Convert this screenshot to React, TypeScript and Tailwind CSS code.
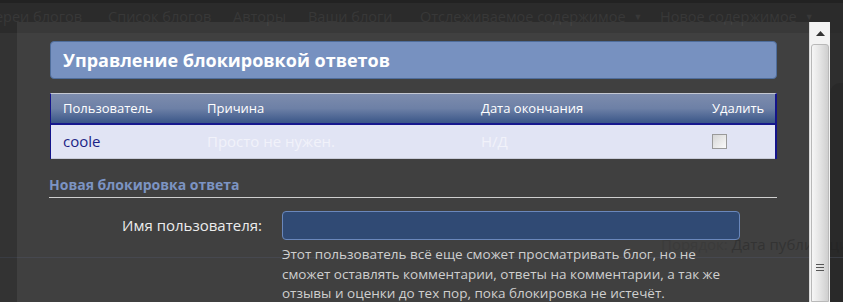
const navItems = [
  { label: 'Галереи блогов', width: 'w-[108px] justify-end pr-[26px]', arrow: false },
  { label: 'Список блогов', width: 'w-[125px]', arrow: false },
  { label: 'Авторы', width: 'w-[75px]', arrow: false },
  { label: 'Ваши блоги', width: 'w-[112px]', arrow: false },
  { label: 'Отслеживаемое содержимое', width: 'w-[240px]', arrow: true },
  { label: 'Новое содержимое', width: 'w-[200px]', arrow: true },
];

function Scrollbar() {
  return (
    <div className="w-[21px] shrink-0 flex flex-col bg-[#f3f3f3] border-l border-[#d8d8d8]">
      <div className="h-[22px] flex items-center justify-center">
        <svg width="9" height="5" viewBox="0 0 9 5"><path d="M0 5 L4.5 0 L9 5 Z" fill="#333" /></svg>
      </div>
      <div className="flex-1 mx-[1px] rounded-t-[3px] border border-[#b9b9b9] bg-gradient-to-r from-[#f6f6f6] via-[#e4e4e4] to-[#cfcfcf] flex items-end justify-center pb-[30px]">
        <div className="flex flex-col gap-[2px]">
          <div className="w-[8px] h-[1px] bg-[#555]" />
          <div className="w-[8px] h-[1px] bg-[#555]" />
          <div className="w-[8px] h-[1px] bg-[#555]" />
        </div>
      </div>
    </div>
  );
}

export default function App() {
  return (
    <div className="relative w-[843px] h-[302px] overflow-hidden bg-[#333333] font-['Open_Sans',sans-serif]">
      {/* page behind the dialog */}
      <div className="h-[3px] bg-[#222222]" />
      <nav className="h-[30px] bg-[#2b2b2b] flex items-start pt-[3px] text-[14.5px] text-[#383838] whitespace-nowrap">
        {navItems.map((item) => (
          <span key={item.label} className={`${item.width} shrink-0 flex items-center gap-[8px]`}>
            {item.label}
            {item.arrow && <span className="text-[9px]">▼</span>}
          </span>
        ))}
      </nav>
      <div className="flex">
        <div className="flex-1" />
        <div className="w-[13px] h-[269px] bg-[#2e2e2e] flex flex-col">
          <div className="h-[50px]" />
          <div className="flex-1 rounded-tl-[10px] bg-[#292929]" />
        </div>
      </div>
      <div className="absolute left-0 right-0 top-[233px] h-[25px] border-b border-[#393c43] pl-[661px] text-[15px] whitespace-nowrap">
        <span className="text-[#2e2e2e]">Порядок: </span>
        <span className="text-[#252525]">Дата публикации (</span>
      </div>

      {/* dialog */}
      <div className="absolute left-[17px] top-[22px] right-[13px] bottom-0 bg-white/[0.064] flex">
        <div className="flex-1 pl-[33px] pr-[32px] pt-[19px]">
          <div className="h-[38px] rounded-[4px] border border-[#4f6d9b] bg-[#7791c0] flex items-center pl-[12px]">
            <h1 className="text-[18px] font-bold text-white leading-none">Управление блокировкой ответов</h1>
          </div>

          <div className="mt-[14px] border-l border-r-2 border-[#14148a] border-t border-t-[#c4c8d2]">
            <div className="h-[31px] bg-gradient-to-b from-[#7d8cad] via-[#6d80a6] to-[#3a5688] border-b-2 border-b-[#16188e] grid grid-cols-[144px_274px_231px_1fr] items-center pl-[12px] text-[13px] text-white">
              <span>Пользователь</span>
              <span>Причина</span>
              <span>Дата окончания</span>
              <span>Удалить</span>
            </div>
            <div className="h-[34px] bg-[#e1e4f4] border-b border-b-[#c8cbd8] grid grid-cols-[144px_274px_231px_1fr] items-center pl-[12px] text-[15px]">
              <span className="text-[#1b1f86]">coole</span>
              <span className="text-[#f1f2fa]">Просто не нужен.</span>
              <span className="text-[#f1f2fa]">Н/Д</span>
              <span>
                <span className="block w-[15px] h-[15px] border border-[#9a9a9a] bg-gradient-to-br from-[#d6d6d6] to-[#fafafa]" />
              </span>
            </div>
          </div>

          <h2 className="mt-[16px] -ml-[1px] pb-[3px] border-b border-[#cfcfcf] text-[14px] font-bold text-[#7c94c3] leading-[19px]">Новая блокировка ответа</h2>

          <div className="mt-[13px] flex gap-[20px]">
            <label className="w-[212px] h-[29px] flex items-center justify-end text-[15px] text-[#ececec]">Имя пользователя:</label>
            <div className="flex flex-col">
              <input className="w-[458px] h-[29px] rounded-[4px] border border-[#6a87bb] bg-[#304a74] outline-none" />
              <p className="mt-[5px] text-[13.5px] leading-[19.5px] text-[#cfcfcf] whitespace-nowrap">
                Этот пользователь всё еще сможет просматривать блог, но не<br />
                сможет оставлять комментарии, ответы на комментарии, а так же<br />
                отзывы и оценки до тех пор, пока блокировка не истечёт.
              </p>
            </div>
          </div>
        </div>
        <Scrollbar />
      </div>
    </div>
  );
}
